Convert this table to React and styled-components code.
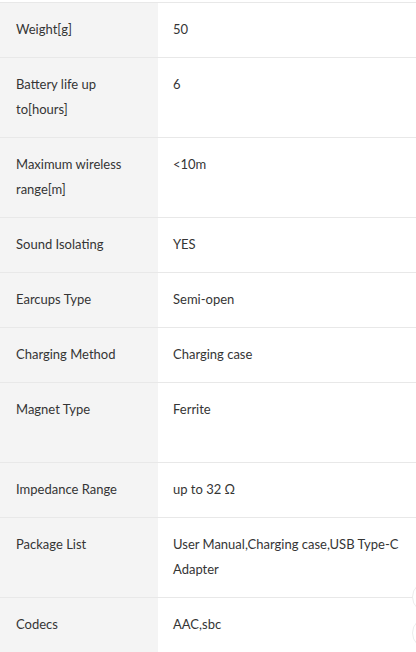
import React from 'react';
import styled, { createGlobalStyle } from 'styled-components';

const GlobalStyle = createGlobalStyle`
  html, body {
    margin: 0;
    padding: 0;
    background: #ffffff;
  }
  body {
    font-family: 'Lato', 'Liberation Sans', sans-serif;
    overflow: hidden;
  }
`;

const Page = styled.div`
  position: relative;
  width: 416px;
  height: 652px;
  padding-top: 2px;
  box-sizing: border-box;
  overflow: hidden;
`;

const SpecTable = styled.div`
  display: grid;
  grid-template-columns: 158px 1fr;
  border-top: 1px solid #e8e8e8;
`;

const Row = styled.div`
  display: contents;
`;

const Cell = styled.div`
  min-height: ${(p) => (p.$tall ? 50 : 25)}px;
  padding: 14px 15px 15px ${(p) => (p.$label ? 16 : 15)}px;
  background: ${(p) => (p.$label ? '#f4f4f4' : '#ffffff')};
  border-bottom: 1px solid #e8e8e8;
  color: #353535;
  font-size: 13px;
  line-height: 25px;
`;

const Bubble = styled.div`
  position: absolute;
  right: -28px;
  top: ${(p) => p.$top}px;
  width: 30px;
  height: 30px;
  border-radius: 50%;
  border: 1px solid #ececec;
  background: #ffffff;
`;

const specs = [
  ['Weight[g]', '50'],
  ['Battery life up to[hours]', '6', true],
  ['Maximum wireless range[m]', '<10m', true],
  ['Sound Isolating', 'YES'],
  ['Earcups Type', 'Semi-open'],
  ['Charging Method', 'Charging case'],
  ['Magnet Type', 'Ferrite', true],
  ['Impedance Range', 'up to 32 Ω'],
  ['Package List', 'User Manual,Charging case,USB Type-C Adapter', true],
  ['Codecs', 'AAC,sbc', true],
];

const App = () => (
  <>
    <GlobalStyle />
    <Page>
      <SpecTable>
        {specs.map(([label, value, tall]) => (
          <Row key={label}>
            <Cell $label $tall={tall}>
              {label}
            </Cell>
            <Cell $tall={tall}>{value}</Cell>
          </Row>
        ))}
      </SpecTable>
      <Bubble $top={581} />
      <Bubble $top={617} />
    </Page>
  </>
);

export default App;
